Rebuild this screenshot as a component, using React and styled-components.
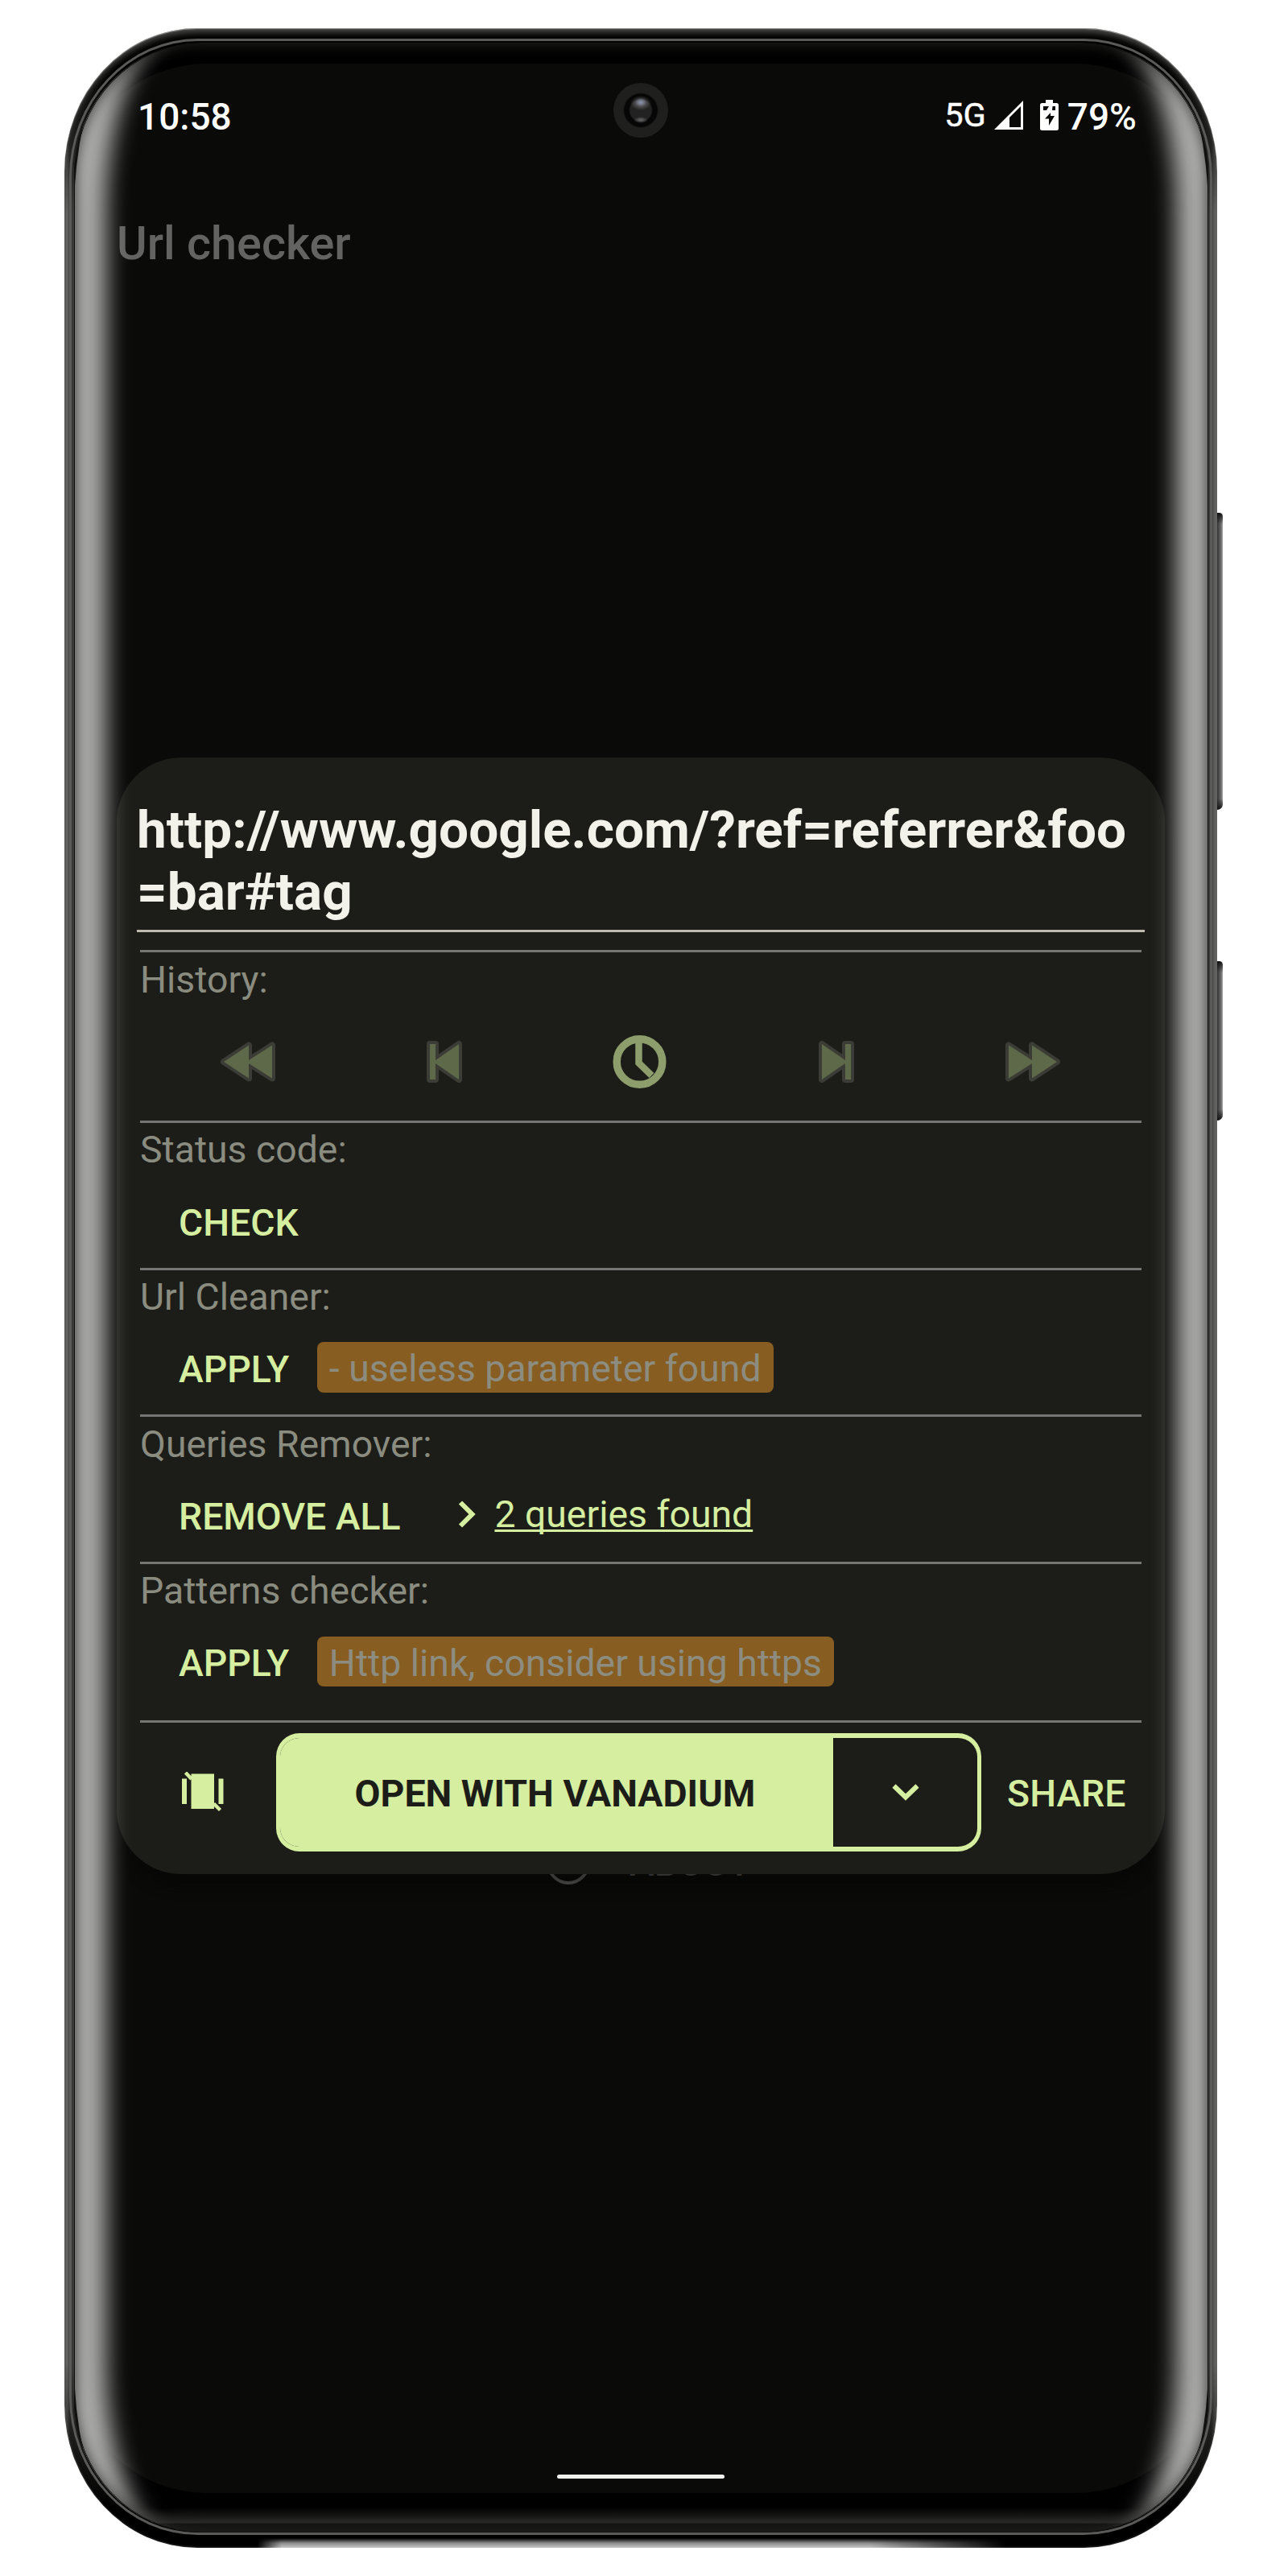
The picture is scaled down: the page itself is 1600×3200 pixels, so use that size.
import React from "react";
import styled, { createGlobalStyle } from "styled-components";

const lime = "#d5eea0";

const GlobalStyle = createGlobalStyle`
  html, body { margin: 0; padding: 0; background: #fff; }
  * { box-sizing: border-box; }
`;

/* ---------- device ---------- */

const Stage = styled.div`
  width: 1600px;
  height: 3200px;
  padding: 35px 0 0 80px;
  overflow: hidden;
  background: #fff;
  font-family: Roboto, "Noto Sans", sans-serif;
  font-size: 46.35px;
  line-height: 56px;
`;

const Device = styled.div`
  position: relative;
  width: 1432px;
  height: 3130px;
  padding: 18px 11px 19px 12px;
  border-radius: 165px / 178px;
  background:
    linear-gradient(180deg, #000 50px, transparent 230px, transparent 2900px, #000 3080px),
    linear-gradient(90deg, #4c4c4a, #6a6a68 3px, #3a3a38 7px, #3a3a38 1425px, #5c5c5a 1428px, #6f6f6d);
  box-shadow: inset 0 1px 1px #9a9a98, inset 0 8px 8px -3px #50504e, inset 0 0 3px #555;
`;

const Chin = styled.div`
  position: absolute;
  left: 240px;
  bottom: 0;
  width: 930px;
  height: 12px;
  background: linear-gradient(180deg, transparent, #8a8a8a 50%, #c8c8c8);
  mask-image: linear-gradient(90deg, transparent, #000 30px, #000 760px, transparent);
`;

const Rim = styled.div`
  position: absolute;
  inset: 13px 6px 16px 6px;
  border: 3px solid #5a5a58;
  border-radius: 160px / 172px;
`;

const SideKey = styled.div`
  position: absolute;
  left: 1432px;
  top: ${(p) => p.$top}px;
  width: 7px;
  height: ${(p) => p.$height}px;
  border-radius: 0 5px 8px 0;
  background: linear-gradient(180deg, #111, transparent 14px, transparent calc(100% - 14px), #111),
    linear-gradient(90deg, #333, #6e6e6e 70%, #aaa);
`;

const Glass = styled.div`
  position: relative;
  width: 100%;
  height: 100%;
  padding: 26px 0 49px;
  overflow: hidden;
  border-radius: 158px / 166px;
  background: linear-gradient(180deg, #000 3062px, #2a2a29 3081px, #111 3082px);
`;

const EdgeLight = styled.div`
  position: absolute;
  inset: -80px 0;
  border-radius: 158px / 290px;
  box-shadow: inset 0 0 28px 40px #adadac;
  pointer-events: none;
`;

const EdgeShade = styled.div`
  position: absolute;
  inset: 0;
  border-radius: inherit;
  box-shadow: inset 0 0 0 1px #111, inset 0 0 16px 3px rgba(40, 40, 38, 0.75);
  pointer-events: none;
`;

const Screen = styled.main`
  position: relative;
  display: flex;
  flex-direction: column;
  height: 3018px;
  padding: 38px 0 18px;
  border-radius: 165px;
  background: #0a0a08;
`;

const Camera = styled.div`
  position: absolute;
  left: 669.5px;
  top: 24px;
  width: 68px;
  height: 68px;
  border-radius: 50%;
  background:
    radial-gradient(ellipse 7px 5px at 34px 24px, #8791ab, transparent),
    radial-gradient(ellipse 13px 9px at 34px 25px, #77777a, transparent),
    radial-gradient(ellipse 9px 4px at 34px 46px, #686868, transparent),
    radial-gradient(circle at 34px 34px, #222 13px, #060606 15px, #060606 20px, #1f1f1e 22px);
`;

/* ---------- app behind the dialog ---------- */

const StatusBar = styled.header`
  display: flex;
  align-items: center;
  height: 56px;
  padding: 0 89px 0 79px;
  color: #fff;
  font-size: 46px;
  font-weight: 500;
`;

const Network = styled.span`
  margin-left: auto;
  font-size: 41.5px;
  font-weight: 400;
  -webkit-text-stroke: 0.5px #fff;
  position: relative;
  top: -2px;
`;

const StatusIcon = styled.svg`
  margin-left: ${(p) => p.$gap}px;
  margin-top: -5px;
`;

const Percent = styled.span`
  margin-left: 11px;
`;

const AppTitle = styled.h1`
  margin: 96px 0 0 53px;
  color: #636361;
  font-size: 57.6px;
  line-height: 68px;
  font-weight: 500;
`;

const AboutRow = styled.div`
  display: flex;
  align-items: center;
  gap: 48px;
  height: 60px;
  margin: 1947px 0 0 586px;
  color: #5c5c5a;
  font-weight: 500;
`;

const HomeBar = styled.div`
  width: 208px;
  height: 5px;
  margin: auto auto 0 600px;
  border-radius: 3px;
  background: #f1f1ee;
`;

/* ---------- dialog ---------- */

const Dialog = styled.section`
  position: absolute;
  left: 53px;
  top: 862px;
  width: 1302px;
  height: 1387px;
  padding: 50.7px 25px 0;
  border-radius: 80px;
  background: #1c1d18;
  box-shadow: 0 24px 14px -6px rgba(5, 5, 5, 0.5);
`;

const UrlField = styled.div`
  height: 166.5px;
  border-bottom: 3px solid #bdbcae;
  color: #f3f2ea;
  font-size: 65.7px;
  line-height: 77.5px;
  font-weight: 700;
  white-space: nowrap;
`;

const Modules = styled.div`
  margin: 22px 4px 0;
`;

const Module = styled.section`
  height: ${(p) => p.$height || 182.6}px;
  border-top: 3px solid #767674;
`;

const Label = styled.h2`
  margin: 0;
  padding: 5.4px 0 6.2px;
  color: #8b8c80;
  font-size: 46.35px;
  line-height: 56px;
  font-weight: 400;
`;

const Row = styled.div`
  display: flex;
  align-items: center;
  height: 112px;
  padding-left: 48px;
`;

const HistoryRow = styled.div`
  display: grid;
  grid-template-columns: repeat(5, 1fr);
  place-items: center;
  height: 137px;
  padding: 0 13px 0 12px;
`;

const TextButton = styled.button`
  padding: 0;
  border: 0;
  background: none;
  color: ${lime};
  font: 500 46.3px/56px Roboto, "Noto Sans", sans-serif;
`;

const Chip = styled.span`
  height: 62.7px;
  margin: -5px 0 0 34.5px;
  padding: 5px 15px 0;
  border-radius: 8px;
  background: #875d22;
  color: #8c8d80;
  line-height: 57.7px;
  white-space: nowrap;
`;

const Expander = styled.a`
  display: flex;
  align-items: center;
  gap: 21px;
  margin: -5px 0 0 72px;
  color: ${lime};
  text-decoration: underline;
  text-decoration-thickness: 3px;
  text-underline-offset: 3px;
  text-decoration-skip-ink: none;
`;

const Footer = styled.footer`
  display: flex;
  align-items: center;
  height: 162.5px;
  padding-top: 13px;
  border-top: 3px solid #767674;
`;

const VibrateButton = styled.button`
  display: grid;
  place-items: center;
  width: 156px;
  height: 146px;
  margin-right: 13px;
  padding: 0;
  border: 0;
  background: none;
`;

const SplitButton = styled.div`
  display: flex;
  width: 875.6px;
  height: 146.4px;
  overflow: hidden;
  border: solid ${lime};
  border-width: 6px 5px;
  border-radius: 29px;
`;

const OpenButton = styled.button`
  width: 687px;
  padding: 4px 4px 0 0;
  border: 0;
  background: ${lime};
  color: #1c1d18;
  font: 700 46.4px/56px Roboto, "Noto Sans", sans-serif;
`;

const MoreButton = styled.button`
  display: grid;
  flex: 1;
  place-items: center;
  padding: 2px 0 0 2px;
  border: 0;
  background: none;
`;

const ShareButton = styled(TextButton)`
  margin-left: 32.5px;
  padding-top: 4px;
`;

/* ---------- icons ---------- */

const SignalIcon = () => (
  <StatusIcon $gap={9} width="38" height="38" viewBox="0 0 38 38">
    <path d="M37 1V37H1Z" fill="#fff" />
    <path d="M34 8V34H20V22Z" fill="#0a0a08" />
  </StatusIcon>
);

const BatteryIcon = () => (
  <StatusIcon $gap={20} width="23" height="38" viewBox="0 0 23 38">
    <path d="M7 0h9v4h4.500q2.500 0 2.500 2.500v29q0 2.500-2.500 2.500h-18Q0 38 0 35.500v-29Q0 4 2.500 4H7Z" fill="#fff" />
    <path d="M4 8H11L8 13H4ZM15.500 8h3.500v5h-4Z" fill="#0a0a08" />
    <path d="M13 16 6 23.500h5V32L18 20h-5Z" fill="#0a0a08" />
  </StatusIcon>
);

const MediaIcon = ({ flip, children }) => (
  <svg width="70" height="54" viewBox="0 0 70 54">
    <g
      transform={flip ? "translate(70 0) scale(-1 1)" : undefined}
      fill="#5d6948"
      stroke="#3b3c36"
      strokeWidth="8"
      strokeLinejoin="round"
      paintOrder="stroke"
    >
      {children}
    </g>
  </svg>
);

const Rewind = ({ flip }) => (
  <MediaIcon flip={flip}>
    <path d="M5 27 36 6.500V25L65 6.500v41L36 29v18.500Z" />
  </MediaIcon>
);

const Skip = ({ flip }) => (
  <MediaIcon flip={flip}>
    <path d="M17 5h7v20L53 5v44L24 29v20h-7Z" />
  </MediaIcon>
);

const ClockIcon = () => (
  <svg width="68" height="68" viewBox="0 0 68 68" fill="none" stroke="#8d9d6b">
    <circle cx="33.500" cy="34" r="28.300" strokeWidth="9.500" />
    <path d="M32.500 10v25.500L48.500 51" strokeWidth="8.500" />
  </svg>
);

const ChevronRight = () => (
  <svg width="24" height="36" viewBox="0 0 24 36" fill="none" stroke={lime} strokeWidth="6">
    <path d="M3 3.500 17.500 18 3 32.500" />
  </svg>
);

const ChevronDown = () => (
  <svg width="36" height="24" viewBox="0 0 36 24" fill="none" stroke={lime} strokeWidth="6">
    <path d="M3.500 3.500 18 17.500 32.500 3.500" />
  </svg>
);

const VibrateOffIcon = () => (
  <svg width="54" height="50" viewBox="0 0 54 50" fill={lime}>
    <path d="M1 8.500h6v31.500H1ZM46.500 8.500h6v31.500h-6ZM12.500 2.500h28.500v43.500H12.500Z" />
    <path d="M5.500 1 13 9M40.500 39.500 48.500 47.500" stroke={lime} strokeWidth="4.500" />
  </svg>
);

const AboutIcon = () => (
  <svg width="56" height="56" viewBox="0 0 56 56" fill="none" stroke="#6a6a68" strokeWidth="4">
    <circle cx="28" cy="28" r="25" />
  </svg>
);

export default function App() {
  return (
    <>
      <GlobalStyle />
      <Stage>
        <Device>
          <SideKey $top={602} $height={369} />
          <SideKey $top={1159} $height={198} />
          <Chin />
          <Rim />
          <Glass>
            <Screen>
              <Camera />
              <StatusBar>
                <span>10:58</span>
                <Network>5G</Network>
                <SignalIcon />
                <BatteryIcon />
                <Percent>79%</Percent>
              </StatusBar>
              <AppTitle>Url checker</AppTitle>
              <AboutRow>
                <AboutIcon />
                <span>ABOUT</span>
              </AboutRow>
              <HomeBar />

              <Dialog>
                <UrlField>
                  http://www.google.com/?ref=referrer&amp;foo
                  <br />
                  =bar#tag
                </UrlField>
                <Modules>
                  <Module $height={211.8}>
                    <Label>History:</Label>
                    <HistoryRow>
                      <Rewind />
                      <Skip />
                      <ClockIcon />
                      <Skip flip />
                      <Rewind flip />
                    </HistoryRow>
                  </Module>
                  <Module>
                    <Label>Status code:</Label>
                    <Row>
                      <TextButton>CHECK</TextButton>
                    </Row>
                  </Module>
                  <Module>
                    <Label>Url Cleaner:</Label>
                    <Row>
                      <TextButton>APPLY</TextButton>
                      <Chip>- useless parameter found</Chip>
                    </Row>
                  </Module>
                  <Module>
                    <Label>Queries Remover:</Label>
                    <Row>
                      <TextButton>REMOVE ALL</TextButton>
                      <Expander>
                        <ChevronRight />
                        <span>2 queries found</span>
                      </Expander>
                    </Row>
                  </Module>
                  <Module $height={197.4}>
                    <Label>Patterns checker:</Label>
                    <Row>
                      <TextButton>APPLY</TextButton>
                      <Chip>Http link, consider using https</Chip>
                    </Row>
                  </Module>
                  <Footer>
                    <VibrateButton aria-label="Vibration off">
                      <VibrateOffIcon />
                    </VibrateButton>
                    <SplitButton>
                      <OpenButton>OPEN WITH VANADIUM</OpenButton>
                      <MoreButton aria-label="More apps">
                        <ChevronDown />
                      </MoreButton>
                    </SplitButton>
                    <ShareButton>SHARE</ShareButton>
                  </Footer>
                </Modules>
              </Dialog>
            </Screen>
            <EdgeLight />
            <EdgeShade />
          </Glass>
        </Device>
      </Stage>
    </>
  );
}
